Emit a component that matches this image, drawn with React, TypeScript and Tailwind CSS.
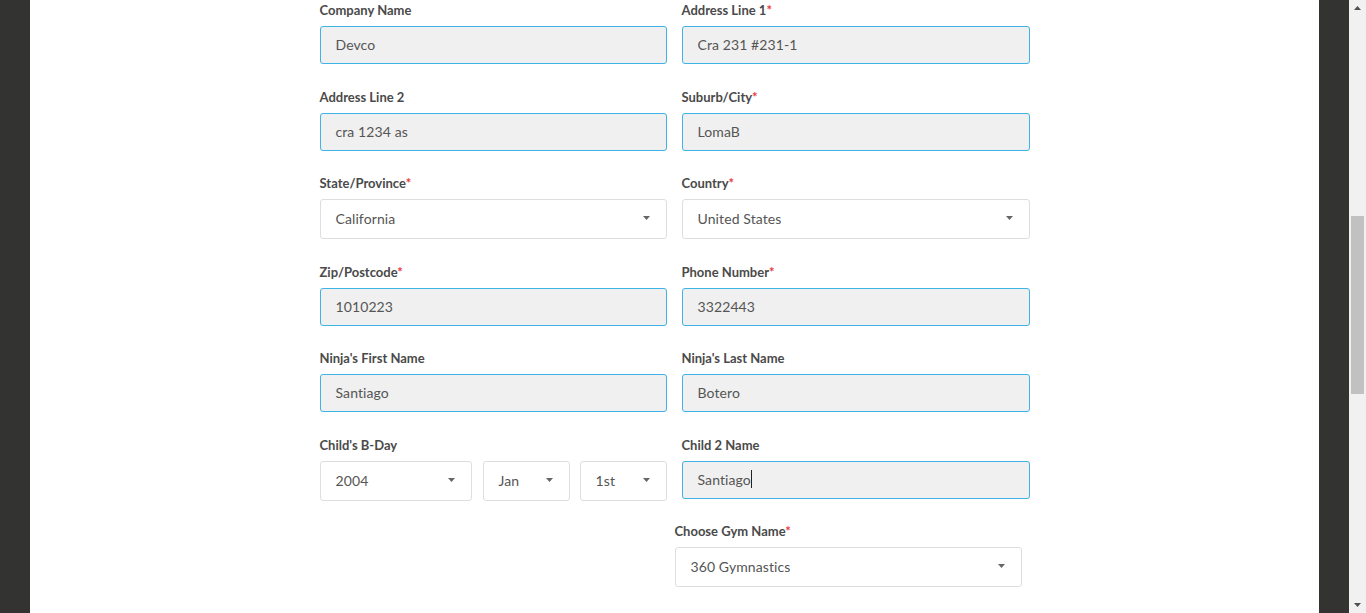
import type { ReactNode } from "react";

const FONT = { fontFamily: "Lato, 'Open Sans', sans-serif" };

function Label({ text, required }: { text: string; required?: boolean }) {
  return (
    <div className="h-4 leading-4 text-[13px] font-bold text-[#4a4a4a] mb-2">
      {text}
      {required && <span className="text-[#e8383d]">*</span>}
    </div>
  );
}

function TextBox({ value, caret }: { value: string; caret?: boolean }) {
  return (
    <div className="h-[38px] rounded-[3px] border border-[#3db3e6] bg-[#f0f0f0] px-[15px] pb-[2px] flex items-center text-[14px] tracking-[0.1px] text-[#555]">
      {value}
      {caret && <span className="inline-block w-px h-[18px] bg-[#222]" />}
    </div>
  );
}

function Caret() {
  return (
    <svg width="7" height="4" viewBox="0 0 7 4" className="shrink-0">
      <path d="M0 0H7L3.5 4Z" fill="#666" />
    </svg>
  );
}

function SelectBox({ value, className = "" }: { value: string; className?: string }) {
  return (
    <div
      className={`h-10 rounded-[3px] border border-[#dedede] bg-white pl-[15px] pr-[16px] pb-[2px] flex items-center justify-between text-[14px] tracking-[0.1px] text-[#555] ${className}`}
    >
      <span>{value}</span>
      <Caret />
    </div>
  );
}

function Row({ children, mb }: { children: ReactNode; mb: string }) {
  return <div className={`grid grid-cols-[347px_348px] gap-x-[15px] ${mb}`}>{children}</div>;
}

export default function App() {
  return (
    <div className="h-[613px] w-[1366px] flex overflow-hidden" style={FONT}>
      <div className="w-[30px] bg-[#333331]" />
      <main className="flex-1 bg-white">
        <div className="w-[710px] mx-auto pt-[2px]">
          <Row mb="mb-[25px]">
            <div>
              <Label text="Company Name" />
              <TextBox value="Devco" />
            </div>
            <div>
              <Label text="Address Line 1" required />
              <TextBox value="Cra 231 #231-1" />
            </div>
          </Row>
          <Row mb="mb-[24px]">
            <div>
              <Label text="Address Line 2" />
              <TextBox value="cra 1234 as" />
            </div>
            <div>
              <Label text="Suburb/City" required />
              <TextBox value="LomaB" />
            </div>
          </Row>
          <Row mb="mb-[25px]">
            <div>
              <Label text="State/Province" required />
              <SelectBox value="California" />
            </div>
            <div>
              <Label text="Country" required />
              <SelectBox value="United States" />
            </div>
          </Row>
          <Row mb="mb-[24px]">
            <div>
              <Label text="Zip/Postcode" required />
              <TextBox value="1010223" />
            </div>
            <div>
              <Label text="Phone Number" required />
              <TextBox value="3322443" />
            </div>
          </Row>
          <Row mb="mb-[25px]">
            <div>
              <Label text="Ninja's First Name" />
              <TextBox value="Santiago" />
            </div>
            <div>
              <Label text="Ninja's Last Name" />
              <TextBox value="Botero" />
            </div>
          </Row>
          <Row mb="mb-[22px]">
            <div>
              <Label text="Child's B-Day" />
              <div className="flex">
                <SelectBox value="2004" className="w-[152px]" />
                <SelectBox value="Jan" className="w-[87px] ml-[11px]" />
                <SelectBox value="1st" className="w-[87px] ml-[10px]" />
              </div>
            </div>
            <div>
              <Label text="Child 2 Name" />
              <TextBox value="Santiago" caret />
            </div>
          </Row>
          <Row mb="mb-0">
            <div />
            <div className="-ml-[7px] w-[347px]">
              <Label text="Choose Gym Name" required />
              <SelectBox value="360 Gymnastics" />
            </div>
          </Row>
        </div>
      </main>
      <div className="w-[30px] bg-[#333331]" />
      <div className="w-[17px] bg-[#f1f1f1] flex flex-col items-center justify-between py-[6px]">
        <svg width="7" height="4" viewBox="0 0 7 4">
          <path d="M3.5 0L7 4H0Z" fill="#505050" />
        </svg>
        <div className="flex-1 w-full flex flex-col items-center pt-[206px]">
          <div className="w-[13px] h-[178px] bg-[#c1c1c1]" />
        </div>
        <svg width="7" height="4" viewBox="0 0 7 4">
          <path d="M0 0H7L3.5 4Z" fill="#505050" />
        </svg>
      </div>
    </div>
  );
}
